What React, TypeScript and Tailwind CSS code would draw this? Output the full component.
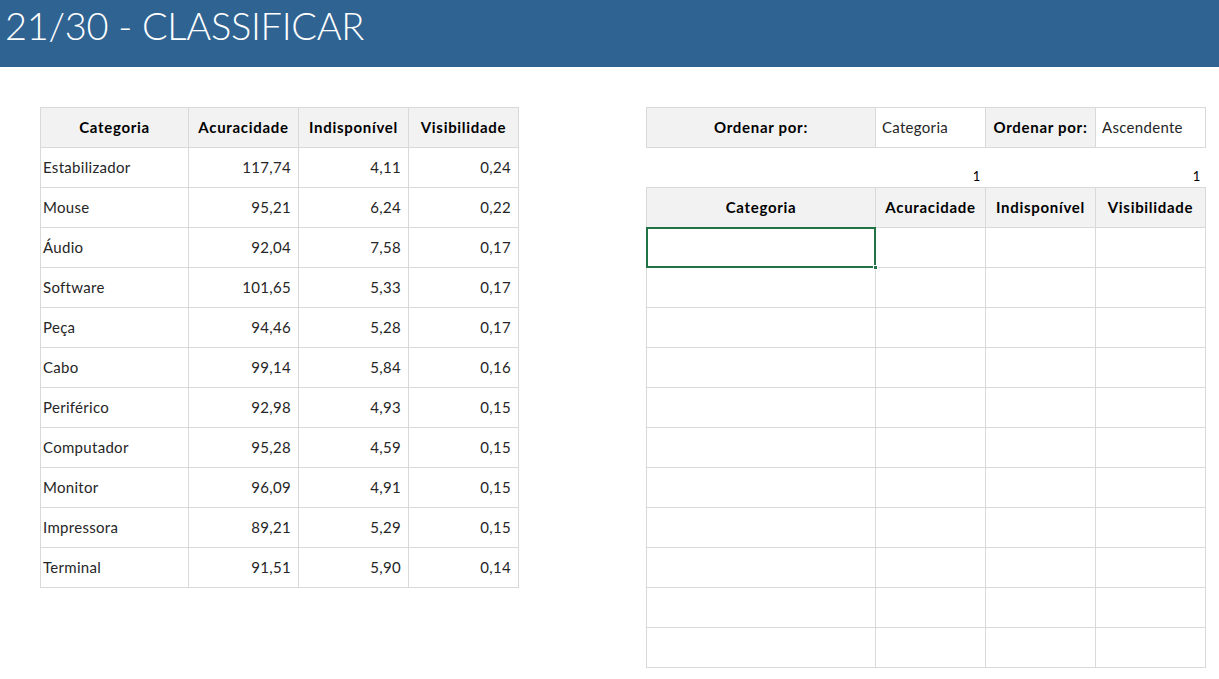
const rows: [string, string, string, string][] = [
  ["Estabilizador", "117,74", "4,11", "0,24"],
  ["Mouse", "95,21", "6,24", "0,22"],
  ["Áudio", "92,04", "7,58", "0,17"],
  ["Software", "101,65", "5,33", "0,17"],
  ["Peça", "94,46", "5,28", "0,17"],
  ["Cabo", "99,14", "5,84", "0,16"],
  ["Periférico", "92,98", "4,93", "0,15"],
  ["Computador", "95,28", "4,59", "0,15"],
  ["Monitor", "96,09", "4,91", "0,15"],
  ["Impressora", "89,21", "5,29", "0,15"],
  ["Terminal", "91,51", "5,90", "0,14"],
];

const cols = ["Acuracidade", "Indisponível", "Visibilidade"];

const cell = "border border-[#d9d9d9] h-[40px] p-0";
const head = "border border-[#d9d9d9] h-[40px] p-0 bg-[#f2f2f2] text-center font-bold text-black tracking-[0.7px]";

const App = () => {
  return (
    <div className="w-[1219px] h-[679px] bg-white text-[15px] tracking-[0.3px] text-[#262626] font-['Lato','Open_Sans',sans-serif] overflow-hidden">
      {/* Title bar */}
      <div className="h-[67px] bg-[#2f6392] pl-[5px] pt-[3px]">
        <h1 className="text-[38px] leading-[44px] font-light text-white tracking-[-0.3px]">21/30 - CLASSIFICAR</h1>
      </div>

      <div className="flex pt-[40px]">
        {/* Source data */}
        <div className="ml-[40px]">
          <table className="border-collapse table-fixed">
            <colgroup>
              <col className="w-[148px]" />
              <col className="w-[110px]" />
              <col className="w-[110px]" />
              <col className="w-[110px]" />
            </colgroup>
            <thead>
              <tr>
                <th className={head}>Categoria</th>
                {cols.map((c) => (
                  <th key={c} className={head}>{c}</th>
                ))}
              </tr>
            </thead>
            <tbody>
              {rows.map((r) => (
                <tr key={r[0]}>
                  <td className={`${cell} pl-[2px]`}>{r[0]}</td>
                  <td className={`${cell} text-right pr-[7px]`}>{r[1]}</td>
                  <td className={`${cell} text-right pr-[7px]`}>{r[2]}</td>
                  <td className={`${cell} text-right pr-[7px]`}>{r[3]}</td>
                </tr>
              ))}
            </tbody>
          </table>
        </div>

        {/* Sort panel */}
        <div className="ml-[127px]">
          <table className="border-collapse table-fixed">
            <colgroup>
              <col className="w-[229px]" />
              <col className="w-[110px]" />
              <col className="w-[110px]" />
              <col className="w-[110px]" />
            </colgroup>
            <tbody>
              <tr>
                <td className={head}>Ordenar por:</td>
                <td className={`${cell} pl-[6px]`}>Categoria</td>
                <td className={head}>Ordenar por:</td>
                <td className={`${cell} pl-[6px]`}>Ascendente</td>
              </tr>
              <tr>
                <td className="h-[40px] p-0" />
                <td className="h-[40px] p-0 align-bottom text-right pr-[5px] text-[13px] text-black leading-[22px]">1</td>
                <td className="h-[40px] p-0" />
                <td className="h-[40px] p-0 align-bottom text-right pr-[5px] text-[13px] text-black leading-[22px]">1</td>
              </tr>
              <tr>
                <th className={head}>Categoria</th>
                {cols.map((c) => (
                  <th key={c} className={head}>{c}</th>
                ))}
              </tr>
              {Array.from({ length: 11 }).map((_, i) => (
                <tr key={i}>
                  <td className={`${cell} relative`}>
                    {i === 0 && (
                      <div className="absolute -inset-[1px] border-2 border-[#217346]">
                        <div className="absolute -right-[4px] -bottom-[4px] w-[5px] h-[5px] bg-[#217346] border border-white" />
                      </div>
                    )}
                  </td>
                  <td className={cell} />
                  <td className={cell} />
                  <td className={cell} />
                </tr>
              ))}
            </tbody>
          </table>
        </div>
      </div>
    </div>
  );
};

export default App;
